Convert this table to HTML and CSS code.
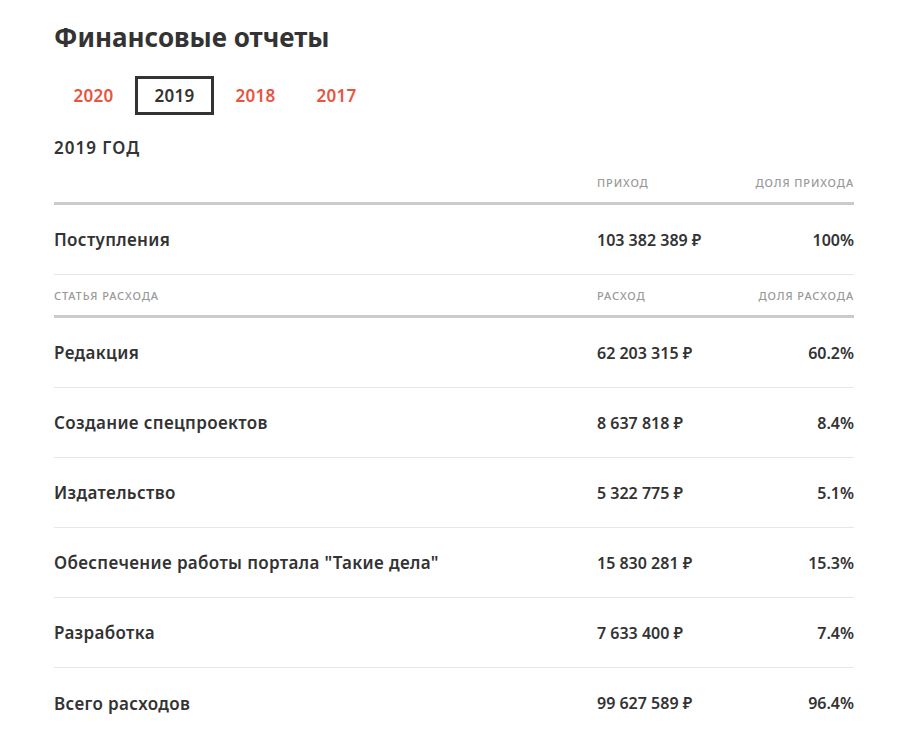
FILE: index.html
```html
<!DOCTYPE html>
<html lang="ru">
<head>
  <meta charset="UTF-8">
  <meta name="viewport" content="width=device-width, initial-scale=1">
  <title>Финансовые отчеты</title>
  <link rel="stylesheet" href="styles.css">
</head>
<body>
  <div class="container">
    <h1>Финансовые отчеты</h1>

    <!-- Переключатель годов -->
    <div class="years">
      <a class="year" href="#">2020</a>
      <a class="year active" href="#">2019</a>
      <a class="year" href="#">2018</a>
      <a class="year" href="#">2017</a>
    </div>

    <h2 class="period">2019 год</h2>

    <div class="report">
      <div class="row head">
        <div></div>
        <div>Приход</div>
        <div class="num">Доля прихода</div>
      </div>
      <div class="row">
        <div class="label">Поступления</div>
        <div>103 382 389 ₽</div>
        <div class="num">100%</div>
      </div>
      <div class="row head head-expense">
        <div>Статья расхода</div>
        <div>Расход</div>
        <div class="num">Доля расхода</div>
      </div>
      <div class="row">
        <div class="label">Редакция</div>
        <div>62 203 315 ₽</div>
        <div class="num">60.2%</div>
      </div>
      <div class="row">
        <div class="label">Создание спецпроектов</div>
        <div>8 637 818 ₽</div>
        <div class="num">8.4%</div>
      </div>
      <div class="row">
        <div class="label">Издательство</div>
        <div>5 322 775 ₽</div>
        <div class="num">5.1%</div>
      </div>
      <div class="row">
        <div class="label">Обеспечение работы портала "Такие дела"</div>
        <div>15 830 281 ₽</div>
        <div class="num">15.3%</div>
      </div>
      <div class="row">
        <div class="label">Разработка</div>
        <div>7 633 400 ₽</div>
        <div class="num">7.4%</div>
      </div>
      <div class="row last">
        <div class="label">Всего расходов</div>
        <div>99 627 589 ₽</div>
        <div class="num">96.4%</div>
      </div>
    </div>
  </div>
</body>
</html>
```

FILE: styles.css
```css
/* Основа */
* { box-sizing: border-box; }
body {
  margin: 0;
  font-family: 'Noto Sans', sans-serif;
  color: #333;
  background: #fff;
}
.container {
  width: 800px;
  margin-left: 54px;
  padding-top: 18px;
}
h1 {
  margin: 0;
  font-size: 26px;
  font-weight: 700;
  line-height: 38px;
  color: #333;
}

/* Годы */
.years {
  display: flex;
  gap: 2px;
  margin-top: 20px;
}
.year {
  display: block;
  width: 79px;
  height: 39px;
  line-height: 33px;
  text-align: center;
  border: 3px solid transparent;
  font-size: 17px;
  font-weight: 600;
  letter-spacing: 0.3px;
  color: #e8553f;
  text-decoration: none;
}
.year.active {
  border-color: #333;
  color: #333;
}

.period {
  margin: 20px 0 0;
  font-size: 17px;
  font-weight: 600;
  line-height: 26px;
  letter-spacing: 1px;
  text-transform: uppercase;
}

/* Таблица */
.report { margin-top: 2px; }
.row {
  display: grid;
  grid-template-columns: 1fr 150px 107px;
  align-items: center;
  height: 70px;
  border-bottom: 1px solid #e6e6e6;
  font-size: 16px;
  font-weight: 600;
}
.row .label {
  font-size: 17px;
  letter-spacing: 0.35px;
}
.row.last { border-bottom: none; }
.row.head {
  height: 42px;
  border-bottom: 3px solid #cbcbcb;
  font-size: 11px;
  font-weight: 500;
  letter-spacing: 0.9px;
  text-transform: uppercase;
  color: #999;
}
.row.head-expense { height: 43px; }
.num { text-align: right; }
```
